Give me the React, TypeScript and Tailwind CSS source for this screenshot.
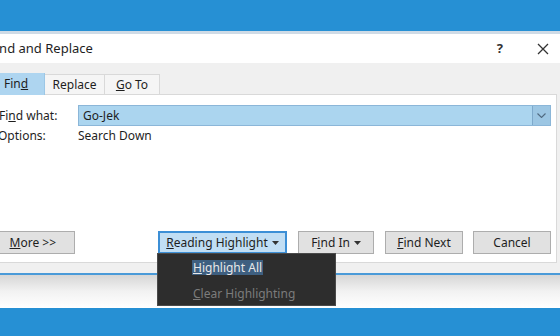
import React from 'react';

const font = { fontFamily: '"Noto Sans", "Open Sans", Arial, sans-serif' };

const Btn: React.FC<{ className?: string; children: React.ReactNode }> = ({ className = '', children }) => (
  <div
    className={`h-[23px] flex items-center justify-center border border-[#adadad] bg-[#e1e1e1] text-[12px] text-[#1e1e1e] ${className}`}
  >
    {children}
  </div>
);

const Caret = () => (
  <svg className="w-[7px] h-[4px] ml-[4px] mt-[1px]" viewBox="0 0 7 4">
    <path d="M0 0h7L3.5 4z" fill="#333" />
  </svg>
);

export default function App() {
  return (
    <div className="w-[560px] h-[336px] overflow-hidden bg-[#2690d4] flex flex-col" style={font}>
      {/* top blue */}
      <div className="h-[31px] shrink-0" />
      <div className="h-[3px] shrink-0 bg-[#cfdbe6]" />

      {/* title bar */}
      <div className="h-[29px] shrink-0 bg-white flex items-center text-[13px] text-[#1e1e1e]">
        <span className="-ml-[11px]">Find and Replace</span>
        <span className="ml-auto mr-[34px] font-bold text-[13px] text-[#333]">?</span>
        <svg className="w-[12px] h-[12px] mr-[11px]" viewBox="0 0 12 12">
          <path d="M1 1l10 10M11 1L1 11" stroke="#333" strokeWidth="1.3" />
        </svg>
      </div>

      {/* tabs */}
      <div className="h-[31px] shrink-0 bg-[#f0f0f0] flex items-end text-[12px] text-[#1e1e1e]">
        <div className="h-[22px] w-[45px] bg-[#aed5f0] border-r border-[#9cc7e6] flex items-center pl-[4px] -mb-px relative z-10">
          Fin<u>d</u>
        </div>
        <div className="h-[20px] w-[60px] bg-[#f5f5f5] border border-l-0 border-b-0 border-[#d9d9d9] flex items-center justify-center">
          Replace
        </div>
        <div className="h-[20px] w-[55px] bg-[#f5f5f5] border border-l-0 border-b-0 border-[#d9d9d9] flex items-center justify-center">
          <u>G</u>o To
        </div>
      </div>

      {/* panel area */}
      <div className="h-[179px] shrink-0 bg-[#f0f0f0] pr-[3px]">
        <div className="relative h-[169px] bg-white border-r border-t border-b border-[#d9d9d9] text-[12px] text-[#1e1e1e]">
          <div className="flex items-center h-[21px] mt-[10px]">
            <span className="w-[79px] -ml-[1px]">
              Fi<u>n</u>d what:
            </span>
            <div className="w-[473px] h-[21px] bg-[#abd5ef] border border-[#8bb6d8] flex items-center">
              <span className="pl-[4px]">Go-Jek</span>
              <div className="ml-auto w-[18px] h-[19px] bg-[#9cc6e3] border-l border-[#7ea9cb] flex items-center justify-center">
                <svg className="w-[9px] h-[5px]" viewBox="0 0 9 5">
                  <path d="M0.5 0.5l4 4 4-4" stroke="#506a80" strokeWidth="1.1" fill="none" />
                </svg>
              </div>
            </div>
          </div>
          <div className="flex items-center h-[18px] mt-[1px]">
            <span className="w-[80px] -ml-[2px]">Options:</span>
            <span>Search Down</span>
          </div>

          <div className="flex items-center mt-[86px]">
            <Btn className="w-[90px] -ml-[15px] justify-end pr-[18px]">
              <u>M</u>ore &gt;&gt;
            </Btn>
            <div className="ml-[83px] w-[129px] h-[23px] flex items-center justify-center border-2 border-[#3c8fd6] bg-[#c1def4] text-[12px] text-[#1e1e1e]">
              <u>R</u>eading Highlight
              <Caret />
            </div>
            <Btn className="ml-[11px] w-[76px]">
              F<u>i</u>nd In
              <Caret />
            </Btn>
            <Btn className="ml-[11px] w-[78px]">
              <u>F</u>ind Next
            </Btn>
            <Btn className="ml-[10px] w-[78px]">Cancel</Btn>
          </div>

          {/* dropdown menu */}
          <div className="absolute left-[157px] top-[158px] w-[179px] h-[53px] bg-[#2d2d2d] border border-[#4a4a4a] z-20 text-[12px]">
            <div className="mt-[6px] ml-[34px] inline-block bg-[#3e5f80] text-[#e8e8e8] px-[1px] leading-[15px]">
              <u>H</u>ighlight All
            </div>
            <div className="mt-[9px] ml-[35px] text-[#7c7c7c] leading-[15px]">
              <u>C</u>lear Highlighting
            </div>
          </div>
        </div>
      </div>

      {/* window bottom edge + shadow */}
      <div className="h-[2px] shrink-0 bg-[#4a9ad8]" />
      <div className="h-[33px] shrink-0 bg-gradient-to-b from-[#d6d6d6] via-[#f2f2f2] to-white" />
    </div>
  );
}
